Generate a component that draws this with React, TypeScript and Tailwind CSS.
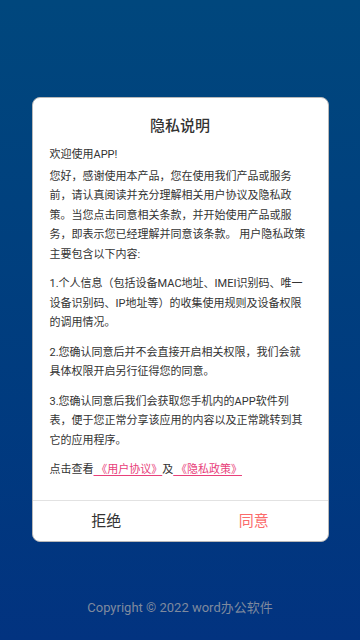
import React from 'react';

const font = { fontFamily: 'Roboto, "Noto Sans CJK SC", sans-serif' };

const App: React.FC = () => {
  return (
    <div
      className="w-[360px] h-[640px] flex flex-col items-center bg-gradient-to-b from-[#00477d] to-[#023380] font-['Roboto','Noto_Sans_CJK_SC',sans-serif]"
      style={font}
    >
      <div className="mt-[97px] w-[297px] h-[445px] bg-white rounded-[8px] border-[1.5px] border-[#b8b8b8] flex flex-col overflow-hidden">
        <h3 className="pt-[17px] text-center text-[15px] leading-[22px] font-medium text-[#333]">隐私说明</h3>
        <div className="flex-1 px-[17px] pt-[8px] text-[11px] leading-[19.5px] text-[#333]">
          <p>欢迎使用APP!</p>
          <p className="mt-[2px]">
            您好，感谢使用本产品，您在使用我们产品或服务前，请认真阅读并充分理解相关用户协议及隐私政策。当您点击同意相关条款，并开始使用产品或服务，即表示您已经理解并同意该条款。 用户隐私政策主要包含以下内容:
          </p>
          <p className="mt-[10px]">
            1.个人信息（包括设备MAC地址、IMEI识别码、唯一设备识别码、IP地址等）的收集使用规则及设备权限的调用情况。
          </p>
          <p className="mt-[10px]">2.您确认同意后并不会直接开启相关权限，我们会就具体权限开启另行征得您的同意。</p>
          <p className="mt-[10px]">
            3.您确认同意后我们会获取您手机内的APP软件列表，便于您正常分享该应用的内容以及正常跳转到其它的应用程序。
          </p>
          <p className="mt-[10px]">
            点击查看
            <span className="text-[#e8407a] underline underline-offset-2"> 《用户协议》</span>
            及
            <span className="text-[#e8407a] underline underline-offset-2"> 《隐私政策》 </span>
          </p>
        </div>
        <div className="h-[41px] border-t border-[#e2e2e2] flex text-[15px]">
          <button className="flex-1 text-[#333]">拒绝</button>
          <button className="flex-1 text-[#fb6b6b]">同意</button>
        </div>
      </div>
      <p className="mt-[57px] text-[13px] leading-[18px] text-[#7f8a9e]">Copyright © 2022 word办公软件</p>
    </div>
  );
};

export default App;
